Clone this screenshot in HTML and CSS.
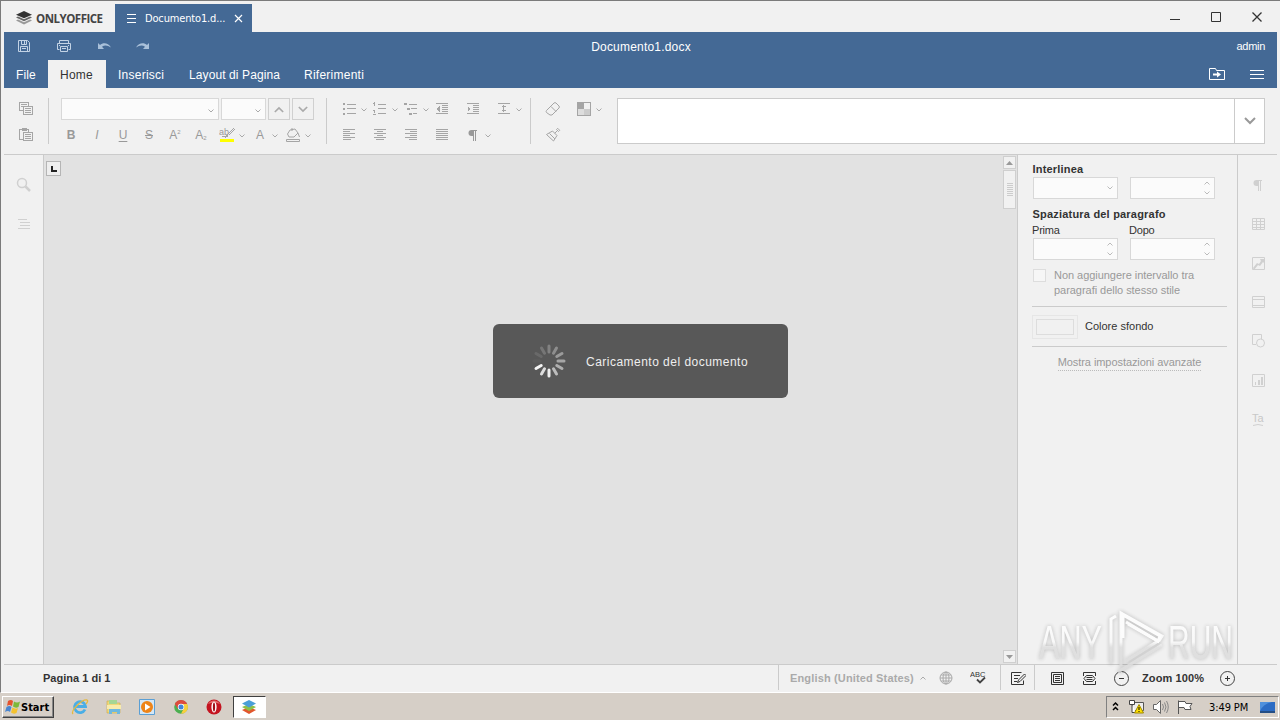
FILE: index.html
```html
<!DOCTYPE html>
<html lang="it">
<head>
    <meta charset="UTF-8">
    <meta name="viewport" content="width=device-width, initial-scale=1.0">
    <title>Documento1.docx - ONLYOFFICE</title>
    <link rel="stylesheet" href="styles.css">
</head>
<body>
    <!-- shared icons -->
    <svg class="sprite">
        <symbol id="caret" viewBox="0 0 6 4"><path d="M.5 .5L3 3L5.500 .5" fill="none" stroke="currentColor"/></symbol>
        <symbol id="caret-up" viewBox="0 0 6 4"><path d="M.5 3.500L3 1L5.500 3.500" fill="none" stroke="currentColor"/></symbol>
        <symbol id="pilcrow" viewBox="0 0 14 14"><path d="M7 2H5.500a3 3 0 0 0 0 6H7z" fill="currentColor"/><path d="M7.500 2v11M9.500 2v11M6 2.500h5" stroke="currentColor" fill="none"/></symbol>
    </svg>

    <div class="window">
        <div class="titlebar">
            <div class="brand">
                <svg width="16" height="14" viewBox="0 0 16 14"><path d="M8 7.300L0 3.700 8 0l8 3.700z" fill="#333"/><path d="M0 6.500l2-.9 6 2.700 6-2.700 2 .9-8 3.700z" fill="#666"/><path d="M0 9.500l2-.9 6 2.700 6-2.700 2 .9L8 13.400z" fill="#999"/></svg>
                <span>ONLYOFFICE</span>
            </div>
            <div class="doc-tab">
                <svg width="10" height="10"><path d="M0 1.500h9M0 5.500h9M0 9.500h9" stroke="#fff"/></svg>
                <span class="doc-name">Documento1.d...</span>
                <svg width="9" height="9"><path d="M1 1l7 7M8 1l-7 7" stroke="#fff" stroke-width="1.200"/></svg>
            </div>
            <div class="win-buttons">
                <svg width="12" height="12"><path d="M1 8.500h10" stroke="#333"/></svg>
                <svg width="12" height="12"><path d="M1.500 1.500h9v9h-9z" fill="none" stroke="#333"/></svg>
                <svg width="12" height="12"><path d="M1.500 1.500l9 9M10.500 1.500l-9 9" stroke="#333" stroke-width="1.300"/></svg>
            </div>
        </div>

        <div class="header">
            <div class="quick">
                <svg width="14" height="14"><path d="M1.500 1.500h9l2 2v9h-11zM4.500 1.500v4h5v-4M7.500 2v3M3.500 12.500v-5h7v5M5 9.500h4" fill="none" stroke="#c3d3e5"/></svg>
                <svg width="16" height="14"><path d="M3.500 4.500v-3h9v3M3.500 10.500h-2v-6h13v6h-2M4.500 7.500h7v5h-7zM6 9.500h4M3 6.500h1M12 6.500h1" fill="none" stroke="#c3d3e5"/></svg>
                <svg width="14" height="14"><path d="M1 4v6h6L5 7.800C7.500 5.800 10.500 6 14 8.500 11 3.500 6 3.500 3 6z" fill="#a9c0d9"/></svg>
                <svg width="14" height="14"><path d="M13 4v6H7l2-2.200C6.500 5.800 3.500 6 0 8.500 3 3.500 8 3.500 11 6z" fill="#a9c0d9"/></svg>
            </div>
            <div class="doc-title">Documento1.docx</div>
            <div class="user">admin</div>
        </div>

        <div class="tabs">
            <div class="tab tab-file">File</div>
            <div class="tab tab-home active">Home</div>
            <div class="tab tab-insert">Inserisci</div>
            <div class="tab tab-layout">Layout di Pagina</div>
            <div class="tab tab-refs">Riferimenti</div>
            <div class="tabs-right">
                <svg width="17" height="14"><path d="M.5 12.500v-11h6l1 2h8v9z" fill="none" stroke="#fff"/><path d="M4 7.500h5" stroke="#fff" stroke-width="2"/><path d="M8 4.500l4 3-4 3z" fill="#fff"/></svg>
                <svg width="14" height="10"><path d="M0 1.500h14M0 5.500h14M0 9.500h14" stroke="#fff"/></svg>
            </div>
        </div>

        <div class="toolbar">
            <div class="group group-clip">
                <div class="row">
                    <svg class="ico" viewBox="0 0 16 16"><path d="M5.500 9.500h-4v-8h9v3M3 3.500h6M3 5.500h2M5.500 5.500h9v8h-9zM7 7.500h6M7 9.500h6M7 11.500h6"/></svg>
                </div>
                <div class="row">
                    <svg class="ico" viewBox="0 0 16 16"><path d="M5.500 12.500h-4v-10h9v2M4 1.500h4v2H4zM5.500 5.500h9v8h-9zM7 7.500h6M7 9.500h6M7 11.500h6"/></svg>
                </div>
            </div>
            <div class="sep"></div>
            <div class="group group-font">
                <div class="row combos">
                    <div class="combo combo-font"><svg class="caret"><use href="#caret"/></svg></div>
                    <div class="combo combo-size"><svg class="caret"><use href="#caret"/></svg></div>
                    <div class="size-btn"><svg class="caret-big"><use href="#caret-up"/></svg></div>
                    <div class="size-btn"><svg class="caret-big"><use href="#caret"/></svg></div>
                </div>
                <div class="row format">
                    <span class="glyph bold">B</span>
                    <span class="glyph italic">I</span>
                    <span class="glyph underline">U</span>
                    <span class="glyph strike">S</span>
                    <span class="glyph">A<sup>2</sup></span>
                    <span class="glyph">A<sub>2</sub></span>
                    <div class="btn">
                        <svg class="ico" viewBox="0 0 16 16"><text x="0" y="8" class="mini">ab</text><path d="M14.500 1.500l-6 6-1 2 2-1 6-6M3 9.500h4"/><path d="M1 13.500h14" class="marker"/></svg>
                        <svg class="caret"><use href="#caret"/></svg>
                    </div>
                    <div class="btn"><span class="glyph">A</span><svg class="caret"><use href="#caret"/></svg></div>
                    <div class="btn">
                        <svg class="ico smooth" viewBox="0 0 16 16"><path d="M5 3l5-1 3 4-4 4H4L2.500 7zM7 1v3M13 6l1.500 4"/><path d="M1.500 12.500h13v2h-13z"/></svg>
                        <svg class="caret"><use href="#caret"/></svg>
                    </div>
                </div>
            </div>
            <div class="sep"></div>
            <div class="group group-par">
                <div class="row">
                    <div class="btn"><svg class="ico" viewBox="0 0 16 16"><path d="M2 3h2M2 8h2M2 13h2" class="dot"/><path d="M6 3.500h9M6 7.500h9M6 12.500h9"/></svg><svg class="caret"><use href="#caret"/></svg></div>
                    <div class="btn"><svg class="ico" viewBox="0 0 16 16"><path d="M2.500 1v4M1 2.500h1M1 9.500h2M2.500 10v2M1 13.500h3M6 3.500h8M6 7.500h8M6 12.500h8"/></svg><svg class="caret"><use href="#caret"/></svg></div>
                    <div class="btn"><svg class="ico" viewBox="0 0 16 16"><path d="M1 3h3M4 8h3M6 13h3" class="dot"/><path d="M6 3.500h8M8 7.500h6M10 12.500h4"/></svg><svg class="caret"><use href="#caret"/></svg></div>
                    <div class="btn"><svg class="ico" viewBox="0 0 16 16"><path d="M2 2.500h12M8 4.500h6M8 6.500h6M8 8.500h6M8 10.500h6M2 12.500h12"/><path d="M6 5v6L2.500 8z" class="solid"/></svg></div>
                    <div class="btn"><svg class="ico" viewBox="0 0 16 16"><path d="M2 2.500h12M8 4.500h6M8 6.500h6M8 8.500h6M8 10.500h6M2 12.500h12"/><path d="M2.500 5v6L6 8z" class="solid"/></svg></div>
                    <div class="btn"><svg class="ico" viewBox="0 0 16 16"><path d="M2 2.500h12M2 12.500h12M7.500 4v7M5.500 5.500h4M5.500 9.500h4"/></svg><svg class="caret"><use href="#caret"/></svg></div>
                </div>
                <div class="row">
                    <div class="btn"><svg class="ico" viewBox="0 0 16 16"><path d="M2 2.500h12M2 4.500h7M2 6.500h12M2 8.500h7M2 10.500h12M2 12.500h8"/></svg></div>
                    <div class="btn"><svg class="ico" viewBox="0 0 16 16"><path d="M2 2.500h12M5 4.500h6M2 6.500h12M5 8.500h6M2 10.500h12M4 12.500h8"/></svg></div>
                    <div class="btn"><svg class="ico" viewBox="0 0 16 16"><path d="M2 2.500h12M7 4.500h7M2 6.500h12M7 8.500h7M2 10.500h12M6 12.500h8"/></svg></div>
                    <div class="btn"><svg class="ico" viewBox="0 0 16 16"><path d="M2 2.500h12M2 4.500h12M2 6.500h12M2 8.500h12M2 10.500h12M2 12.500h12"/></svg></div>
                    <div class="btn"><svg class="pil"><use href="#pilcrow"/></svg><svg class="caret"><use href="#caret"/></svg></div>
                </div>
            </div>
            <div class="sep"></div>
            <div class="group group-style">
                <div class="row">
                    <div class="btn"><svg class="ico smooth" viewBox="0 0 16 16"><path d="M1.500 9.500L9 2q1-.8 2 0l3 3q.8 1 0 2l-7 7H5L1.500 11.500q-.8-1 0-2zM6 5.500l5 5"/></svg></div>
                    <div class="btn"><svg class="ico" viewBox="0 0 16 16"><path d="M8 8h6v6H8z" fill="#ccc" stroke="none"/><path d="M2 8h6v6H2z" fill="#ddd" stroke="none"/><path d="M2 2h6v6H2z" class="solid"/><path d="M1.500 1.500h13v13h-13z"/></svg><svg class="caret"><use href="#caret"/></svg></div>
                </div>
                <div class="row">
                    <div class="btn"><svg class="ico smooth" viewBox="0 0 16 16"><path d="M1.500 7.500l6-3.500 4.500 4.500L8.500 14zM4.500 6.500l5.500 5.500M9.800 6.200L12 4M11.500 2.500l2 2 1.200-1.200-2-2z"/></svg></div>
                </div>
            </div>
            <div class="styles-box">
                <div class="styles-arrow"><svg width="12" height="8"><path d="M1 1l5 5 5-5" fill="none" stroke="#999" stroke-width="2"/></svg></div>
            </div>
        </div>

        <div class="main">
            <div class="left-bar">
                <svg class="side" viewBox="0 0 16 16"><circle cx="6" cy="6" r="4.500" stroke-width="1.500"/><path d="M9.500 9.500l4.500 4.500" stroke-width="2.500"/></svg>
                <svg class="side" viewBox="0 0 16 16"><path d="M2 3.500h9M4 6.500h10M4 9.500h10M2 12.500h12"/></svg>
            </div>
            <div class="canvas">
                <div class="tab-stop"><svg width="13" height="13"><path d="M5 4v5H10" fill="none" stroke="#222" stroke-width="2"/></svg></div>
                <div class="scroll">
                    <div class="scroll-btn"><svg width="7" height="4"><path d="M0 4l3.500-4L7 4z" fill="#999"/></svg></div>
                    <div class="thumb"><svg width="6" height="14"><path d="M0 .5h6M0 2.500h6M0 4.500h6M0 6.500h6M0 8.500h6M0 10.500h6M0 12.500h6" stroke="#ccc"/></svg></div>
                    <div class="scroll-btn scroll-down"><svg width="7" height="4"><path d="M0 0l3.500 4L7 0z" fill="#999"/></svg></div>
                </div>
            </div>
            <div class="panel">
                <div class="label-bold">Interlinea</div>
                <div class="fields">
                    <div class="combo field"><svg class="caret"><use href="#caret"/></svg></div>
                    <div class="combo field spin"><svg class="caret"><use href="#caret-up"/></svg><svg class="caret"><use href="#caret"/></svg></div>
                </div>
                <div class="label-bold spacing-title">Spaziatura del paragrafo</div>
                <div class="labels"><span>Prima</span><span>Dopo</span></div>
                <div class="fields">
                    <div class="combo field spin"><svg class="caret"><use href="#caret-up"/></svg><svg class="caret"><use href="#caret"/></svg></div>
                    <div class="combo field spin"><svg class="caret"><use href="#caret-up"/></svg><svg class="caret"><use href="#caret"/></svg></div>
                </div>
                <div class="check"><span class="box"></span><span class="check-text">Non aggiungere intervallo tra<br>paragrafi dello stesso stile</span></div>
                <div class="line"></div>
                <div class="color-row"><span class="color-box"><i></i></span><span>Colore sfondo</span></div>
                <div class="line"></div>
                <div class="advanced"><span>Mostra impostazioni avanzate</span></div>
            </div>
            <div class="right-bar">
                <svg class="pil"><use href="#pilcrow"/></svg>
                <svg class="side" viewBox="0 0 16 16"><path d="M2.500 2.500h12v11h-12zM2.500 5.500h12M2.500 8.500h12M2.500 11.500h12M6.500 2.500v11M10.500 2.500v11"/></svg>
                <svg class="side" viewBox="0 0 16 16"><path d="M2.500 2.500h12v12h-12z"/><path d="M3 13l4-5 2 1 2-3-1-2h4v4l-1-1-3 4-2-1-4 5z" class="fill"/></svg>
                <svg class="side" viewBox="0 0 16 16"><path d="M2.500 2.500h12v11h-12zM2.500 5.500h12M2.500 11.500h12"/></svg>
                <svg class="side" viewBox="0 0 16 16"><path d="M6 11.500H2.500v-10h9V6"/><circle cx="10.500" cy="10" r="4"/></svg>
                <svg class="side" viewBox="0 0 16 16"><path d="M2.500 2.500h12v12h-12z"/><path d="M5 10h1v3H5zM8 8h2v5H8zM11 5h2v8h-2z" class="fill"/></svg>
                <svg class="side" viewBox="0 0 16 16"><text x="2" y="11" class="art">Ta</text><path d="M3 14.500q5-2 10 0"/></svg>
            </div>
        </div>

        <div class="statusbar">
            <div class="pages">Pagina 1 di 1</div>
            <div class="lang">English (United States)<svg class="caret"><use href="#caret-up"/></svg></div>
            <svg class="st" viewBox="0 0 16 16"><g fill="none" stroke="#aaa"><circle cx="8" cy="8" r="6"/><ellipse cx="8" cy="8" rx="3" ry="6"/><path d="M8 2v12M2 8h12M3 5h10M3 11h10"/></g></svg>
            <svg class="st abc" viewBox="0 0 16 16"><text x="0" y="7">ABC</text><path d="M7 9.500l3 3 5-5" fill="none" stroke="#444" stroke-width="1.800"/></svg>
            <div class="review"><svg class="st" viewBox="0 0 16 16"><path d="M11.500 2.500h-10v12h12v-4M4 5.500h6M4 8.500h4M4 11.500h3M14.500 4l-6 6-1 2.500 2.500-1 6-6z" fill="none" stroke="#333"/></svg></div>
            <svg class="st" viewBox="0 0 16 16"><path d="M2.500 2.500h12v12h-12zM4.500 4.500h8v8h-8zM6 6.500h5M6 8.500h5M6 10.500h5" fill="none" stroke="#333"/></svg>
            <svg class="st st-width" viewBox="0 0 16 16"><path d="M2.500 6V2.500h12V6M2.500 11v3.500h12V11M5.500 5.500h6l2.500 3-2.500 3h-6L3 8.500zM5.500 7.500h6M5.500 9.500h6" fill="none" stroke="#333"/></svg>
            <svg class="st" viewBox="0 0 16 16"><circle cx="8.500" cy="8.500" r="7" fill="none" stroke="#444"/><path d="M6 8.500h5" stroke="#333"/></svg>
            <div class="zoom">Zoom 100%</div>
            <svg class="st" viewBox="0 0 16 16"><circle cx="8.500" cy="8.500" r="7" fill="none" stroke="#444"/><path d="M6 8.500h5M8.500 6v5" stroke="#333"/></svg>
        </div>

        <div class="loader">
            <svg width="36" height="36" viewBox="-18 -18 36 36" stroke="#fff" stroke-width="3" stroke-linecap="round">
                <path d="M0-9v-6" opacity=".25"/>
                <path d="M0-9v-6" transform="rotate(30)" opacity=".32"/>
                <path d="M0-9v-6" transform="rotate(60)" opacity=".4"/>
                <path d="M0-9v-6" transform="rotate(90)" opacity=".47"/>
                <path d="M0-9v-6" transform="rotate(120)" opacity=".52"/>
                <path d="M0-9v-6" transform="rotate(150)" opacity=".6"/>
                <path d="M0-9v-6" transform="rotate(180)" opacity=".9"/>
                <path d="M0-9v-6" transform="rotate(210)" opacity=".8"/>
                <path d="M0-9v-6" transform="rotate(240)" opacity=".95"/>
                <path d="M0-9v-6" transform="rotate(270)" opacity=".03"/>
                <path d="M0-9v-6" transform="rotate(300)" opacity=".1"/>
                <path d="M0-9v-6" transform="rotate(330)" opacity=".18"/>
            </svg>
            <span>Caricamento del documento</span>
        </div>
    </div>

    <div class="taskbar">
        <div class="start">
            <svg width="16" height="16"><path d="M3 2q3-2 5 0L7 7Q4 5 2 7z" fill="#e5532d"/><path d="M9 2.500q3 2 6 0L13.500 8q-3 1.500-5.500-.5z" fill="#7db83a"/><path d="M1.500 8q3-2 5 0l-1.500 5q-2-2-5 0z" fill="#4a86d0"/><path d="M7.500 8.500q3 2 5.500.5l-1.500 5q-3 1.500-5.500-.5z" fill="#f4c22e"/></svg>
            <span>Start</span>
        </div>
        <div class="launch">
            <svg width="18" height="18"><path d="M14 11.500a5.500 5.500 0 1 1 .5-3H5" fill="none" stroke="#4aaee6" stroke-width="2.800"/><path d="M2 16C-1 13 11 1 16 2c1.500.5 0 3-1 4" fill="none" stroke="#e6b93d" stroke-width="1.300"/></svg>
            <svg width="18" height="18"><path d="M2 3h5l1 2h7v10H2z" fill="#f0d878" stroke="#c9a74a" stroke-width=".6"/><path d="M4 2h8v4H4z" fill="#a5d694"/><path d="M2 7h14v4H2z" fill="#f8ebac"/><path d="M4 16v-5h11v5h-3v-2H7v2z" fill="#6fb8de"/></svg>
            <svg width="18" height="18"><path d="M1.500 1.500h15v15h-15z" fill="#d4e7f6" stroke="#5b9fd4"/><circle cx="9" cy="9" r="6" fill="#ee8418"/><path d="M7 5.500v7L12.500 9z" fill="#fff"/></svg>
            <svg width="18" height="18"><circle cx="9" cy="9" r="6.800" fill="#4caf50"/><path d="M2.800 6A6.800 6.800 0 0 1 15.200 6H9l-3 5z" fill="#dd4b3e"/><path d="M15.200 6A6.800 6.800 0 0 1 9 15.800L12 10 9 6z" fill="#f8cf3d"/><circle cx="9" cy="9" r="3.200" fill="#fff"/><circle cx="9" cy="9" r="2.500" fill="#4285d8"/></svg>
            <svg width="18" height="18"><circle cx="9" cy="9" r="7.500" fill="#c41420"/><path d="M3 6a7 7 0 0 1 12 0q-6-3-12 0z" fill="#e36a6a"/><ellipse cx="9" cy="9" rx="2.600" ry="5.500" fill="#fff"/><ellipse cx="9" cy="9" rx="1.100" ry="4.500" fill="#a00f18"/></svg>
            <div class="task-active"><svg width="16" height="16"><path d="M1 11l7-3 7 3-7 4z" fill="#e2562c"/><path d="M1 8l7-3 7 3-7 4z" fill="#8dc04a"/><path d="M1 4.500L8 1l7 3.500L8 8.500z" fill="#4a9fd8"/></svg></div>
        </div>
        <div class="tray">
            <svg width="9" height="12"><path d="M2 4.500l2.500-2.500L7 4.500M2 9l2.500-2.500L7 9" fill="none" stroke="#000" stroke-width="1.500"/></svg>
            <svg class="tray-net" width="18" height="16"><path d="M4.500 3.500h11v8h-11z" fill="#eee" stroke="#555"/><path d="M1.500 1.500h5v4h-5zM4 5.500v8h4" fill="#fff" stroke="#444"/><path d="M11 5.500L15.500 14h-9z" fill="#ffe000" stroke="#a08a00"/><path d="M11 8v3M11 12v1" stroke="#000"/></svg>
            <svg class="tray-vol" width="18" height="16"><path d="M1.500 5.500h3l4-4v13l-4-4h-3z" fill="#fff" stroke="#666"/><path d="M10.500 5q2 3 0 6M12.500 3.500q3 4.500 0 9M14.500 2q3.500 6 0 12" fill="none" stroke="#888"/></svg>
            <svg class="tray-flag" width="18" height="16"><path d="M2.500 15V1.500M3 2.500h6l1 2h6l-2 3 1 3H9l-1-2H3" fill="#fff" stroke="#555"/></svg>
            <span class="clock">3:49 PM</span>
            <svg class="tray-desk" width="15" height="12"><path d="M0 1h15v9H0z" fill="#2c6cc4"/><path d="M0 10Q3 3 12 1H0z" fill="#4f90dc"/><path d="M0 10h15v2H0z" fill="#244e85"/></svg>
        </div>
    </div>

    <!-- watermark lies over the panel and the status bar -->
    <svg class="watermark" width="244" height="80">
        <defs>
            <linearGradient id="wm" gradientUnits="userSpaceOnUse" x1="0" y1="10" x2="0" y2="62">
                <stop offset="0" stop-color="#fff"/>
                <stop offset=".5" stop-color="#fafafa"/>
                <stop offset=".6" stop-color="#dedede"/>
                <stop offset="1" stop-color="#dadada"/>
            </linearGradient>
        </defs>
        <text x="3" y="53" textLength="63" lengthAdjust="spacingAndGlyphs">ANY</text>
        <text x="132" y="53" textLength="65" lengthAdjust="spacingAndGlyphs">RUN</text>
        <path d="M75 58V13l5-3M85 60V7l41 23-3 5M90 16l32 19-32 20M82 66l44-27"/>
        <path d="M87 32V9l37 21-2 5-30-17" class="wm-top"/>
    </svg>
</body>
</html>
```
FILE: styles.css
```css
body {
    margin: 0;
    width: 1280px;
    height: 720px;
    overflow: hidden;
    position: relative;
    font-family: "Liberation Sans", Arial, sans-serif;
    font-size: 11px;
    color: #333;
    background-color: #d6cfc7;
}

* {
    box-sizing: border-box;
}

svg {
    display: block;
    flex: none;
}

.sprite {
    position: absolute;
    width: 0;
    height: 0;
}

.window {
    height: 693px;
    padding: 3px 3px 0 3px;
    border-top: 1px solid #7b7b7b;
    border-left: 1px solid #7b7b7b;
    border-bottom: 1px solid #fff;
    background-color: #f1f1f1;
}

/* Title bar */
.titlebar {
    height: 28px;
    display: flex;
}

.brand {
    width: 111px;
    padding-left: 12px;
    display: flex;
    align-items: center;
    gap: 4px;
    font-family: "Open Sans", sans-serif;
    font-weight: bold;
    font-size: 11.5px;
    letter-spacing: -0.5px;
}

.brand span {
    color: #444;
}

.doc-tab {
    width: 137px;
    padding: 0 9px 0 12px;
    display: flex;
    align-items: center;
    background-color: #446995;
    color: #fff;
    font-family: "DejaVu Sans Condensed", "DejaVu Sans", sans-serif;
    font-size: 11px;
    letter-spacing: -0.15px;
}

.doc-name {
    flex: 1;
    padding-left: 8px;
    white-space: nowrap;
}

.win-buttons {
    margin-left: auto;
    padding: 7px 14px 0 0;
    display: flex;
    gap: 29px;
}

/* Blue header */
.header,
.tabs {
    height: 28px;
    display: flex;
    align-items: center;
    background-color: #446995;
    color: #fff;
    font-size: 12px;
}

.quick {
    flex: 1;
    display: flex;
    align-items: center;
    gap: 25px;
    padding-left: 13px;
}

.doc-title {
    padding-top: 1px;
    letter-spacing: 0.2px;
}

.user {
    flex: 1;
    padding-right: 12px;
    text-align: right;
    font-size: 11px;
    letter-spacing: -0.3px;
}

.tab {
    height: 28px;
    line-height: 30px;
    padding-left: 12px;
    letter-spacing: 0.1px;
}

.tab-file { width: 44px; }
.tab-home { width: 58px; }
.tab-insert { width: 71px; }
.tab-layout { width: 115px; }

.tab-home,
.tab-insert,
.tab-refs {
    letter-spacing: 0.25px;
}

.tab.active {
    background-color: #f1f1f1;
    color: #333;
}

.tabs-right {
    margin-left: auto;
    padding-right: 13px;
    display: flex;
    align-items: center;
    gap: 24px;
}

/* Toolbar */
.toolbar {
    height: 67px;
    display: flex;
    padding: 10px 12px 0 12px;
    border-bottom: 1px solid #cbcbcb;
    color: #999;
}

.row {
    height: 22px;
    margin-bottom: 4px;
    display: flex;
    align-items: center;
}

.sep {
    width: 1px;
    height: 46px;
    background-color: #cbcbcb;
}

.group-clip { width: 32px; }
.group-font { width: 277px; padding-left: 12px; }
.group-par { width: 203px; padding-left: 12px; }
.group-style { width: 86px; padding-left: 12px; }

.ico {
    width: 16px;
    height: 16px;
    margin: 0 2px;
    fill: none;
    stroke: #a5a5a5;
    shape-rendering: crispEdges;
}

.ico.smooth {
    shape-rendering: auto;
}

.ico .dot {
    stroke-width: 2;
}

.ico .solid {
    fill: #a5a5a5;
    stroke: none;
}

.ico .marker {
    stroke: #ffff00;
    stroke-width: 3;
}

.ico .mini {
    fill: #999;
    stroke: none;
    font-size: 9px;
}

.caret {
    width: 6px;
    height: 4px;
    color: #aaa;
}

.btn {
    width: 31px;
    display: flex;
    align-items: center;
}

.btn .caret {
    margin-left: 2px;
    margin-top: 1px;
}

.pil {
    width: 14px;
    height: 14px;
    margin: 0 3px;
}

.combo {
    height: 22px;
    display: flex;
    align-items: center;
    justify-content: flex-end;
    padding-right: 4px;
    background-color: #fbfbfb;
    border: 1px solid #d8d8d8;
}

.combos {
    gap: 2px;
}

.combos .combo .caret {
    margin-top: 3px;
}

.combo-font { width: 158px; }
.combo-size { width: 45px; }

.size-btn {
    width: 22px;
    height: 22px;
    display: flex;
    align-items: center;
    justify-content: center;
    border: 1px solid #d0d0d0;
}

.caret-big {
    width: 10px;
    height: 7px;
    color: #aaa;
}

.format .glyph {
    width: 20px;
    margin-right: 6px;
    text-align: center;
    font-size: 12px;
    line-height: 20px;
    white-space: nowrap;
}

.format .btn {
    width: 33px;
}

.format .btn .glyph {
    margin-right: 0;
}

.bold { font-weight: bold; }
.italic { font-style: italic; }
.underline { text-decoration: underline; text-underline-offset: 2px; }
.strike { text-decoration: line-through; }

.glyph sup,
.glyph sub {
    font-size: 6px;
    line-height: 0;
}

.glyph sup { vertical-align: 5px; }
.glyph sub { vertical-align: -1px; }

.styles-box {
    width: 648px;
    height: 46px;
    display: flex;
    justify-content: flex-end;
    background-color: #fff;
    border: 1px solid #cbcbcb;
}

.styles-arrow {
    width: 30px;
    display: flex;
    align-items: center;
    justify-content: center;
    border-left: 1px solid #cbcbcb;
}

/* Document area */
.main {
    height: 509px;
    display: flex;
}

.left-bar {
    width: 40px;
    padding: 22px 0 0 12px;
    border-right: 1px solid #cbcbcb;
}

.side {
    width: 16px;
    height: 16px;
    fill: none;
    stroke: #d0d0d0;
}

.side .fill {
    fill: #d0d0d0;
    stroke: none;
}

.left-bar .side {
    margin-bottom: 23px;
}

.canvas {
    flex: 1;
    display: flex;
    justify-content: space-between;
    background-color: #e2e2e2;
}

.tab-stop {
    width: 15px;
    height: 15px;
    margin: 6px 0 0 2px;
    border: 1px solid #b5b5b5;
    background-color: #eee;
}

.scroll {
    width: 14px;
    display: flex;
    flex-direction: column;
    padding: 1px 1px 1px 0;
}

.scroll-btn,
.thumb {
    display: flex;
    align-items: center;
    justify-content: center;
    height: 13px;
    background-color: #f1f1f1;
    border: 1px solid #cfcfcf;
}

.thumb {
    height: 39px;
    margin-top: 1px;
}

.scroll-down {
    margin-top: auto;
}

.panel {
    width: 220px;
    padding: 7px 10px 0 14px;
    border-left: 1px solid #cbcbcb;
    line-height: 15px;
}

.label-bold {
    font-weight: bold;
    letter-spacing: 0.2px;
    padding-left: 0.5px;
}

.fields {
    display: flex;
    gap: 12px;
    padding-left: 1px;
}

.field {
    width: 85px;
}

.field .caret {
    color: #bbb;
}

.spin {
    flex-direction: column;
    align-items: flex-end;
    justify-content: center;
    gap: 6px;
}

.spacing-title {
    margin-top: 8px;
}

.labels {
    display: flex;
    height: 16px;
    padding-top: 1px;
    letter-spacing: -0.2px;
}

.labels span {
    width: 97px;
}

.check {
    display: flex;
    margin: 8px 0 8px 1px;
    color: #999;
}

.box {
    width: 13px;
    height: 13px;
    margin: 1px 8px 0 0;
    border: 1px solid #ddd;
    background-color: #f6f6f6;
}

.check-text {
    white-space: nowrap;
    letter-spacing: -0.04px;
}

.line {
    height: 1px;
    background-color: #cbcbcb;
}

.color-row {
    height: 39px;
    display: flex;
    align-items: center;
    gap: 7px;
}

.color-box {
    width: 46px;
    height: 24px;
    padding: 3px;
    border: 1px solid #e6e6e6;
}

.color-box i {
    display: block;
    height: 16px;
    border: 1px solid #ddd;
}

.advanced {
    padding-top: 8px;
    text-align: center;
    color: #999;
    letter-spacing: -0.07px;
}

.advanced span {
    display: inline-block;
    line-height: 15px;
    border-bottom: 1px dotted #bbb;
}

.right-bar {
    width: 40px;
    padding: 23px 0 0 12px;
    border-left: 1px solid #cbcbcb;
    display: flex;
    flex-direction: column;
    gap: 23px;
    color: #d0d0d0;
}

.right-bar .pil {
    margin: 0 1px 1px;
}

.side .art {
    fill: #c8c8c8;
    stroke: none;
    font-size: 11px;
}

/* Status bar */
.statusbar {
    height: 28px;
    display: flex;
    align-items: center;
    border-top: 1px solid #cbcbcb;
    padding: 0 42px 2px 39px;
    font-weight: bold;
}

.pages {
    width: 735px;
    letter-spacing: 0.02px;
}

.lang {
    height: 25px;
    width: 160px;
    padding-left: 11px;
    border-left: 1px solid #cbcbcb;
    display: flex;
    align-items: center;
    gap: 6px;
    white-space: nowrap;
    letter-spacing: 0.15px;
    color: #aaa;
}

.st {
    width: 16px;
    height: 16px;
}

.abc {
    margin: 0 14px 0 16px;
}

.abc text {
    font-family: "Liberation Sans", sans-serif;
    font-weight: normal;
    font-size: 7.5px;
    fill: #333;
}

.review {
    width: 35px;
    height: 25px;
    margin-right: 14px;
    display: flex;
    align-items: center;
    justify-content: center;
    border-left: 1px solid #cbcbcb;
    border-right: 1px solid #cbcbcb;
}

.st-width {
    margin: 0 16px;
}

.zoom {
    width: 76px;
    padding: 0 0 0 13px;
    white-space: nowrap;
    margin-right: 14px;
    letter-spacing: 0.1px;
}

/* Loading message */
.loader {
    position: absolute;
    left: 493px;
    top: 324px;
    width: 295px;
    height: 74px;
    display: flex;
    align-items: center;
    gap: 19px;
    padding-left: 38px;
    border-radius: 6px;
    background-color: #585858;
    color: #eee;
    font-size: 12px;
    letter-spacing: 0.48px;
    white-space: nowrap;
}

.loader span {
    padding-top: 1px;
}

/* Windows taskbar */
.taskbar {
    height: 27px;
    display: flex;
    padding: 3px 1px 2px 2px;
    font-family: "DejaVu Sans Condensed", "DejaVu Sans", sans-serif;
    color: #000;
}

.start {
    width: 52px;
    height: 22px;
    display: flex;
    align-items: center;
    padding-left: 2px;
    font-weight: bold;
    font-size: 11px;
    border: 1px solid;
    border-color: #fff #404040 #404040 #fff;
    box-shadow: inset -1px -1px #888;
}

.launch {
    display: flex;
    align-items: center;
    gap: 15.500px;
    padding-left: 17px;
    height: 22px;
}

.task-active {
    width: 33px;
    height: 22px;
    margin-left: -6px;
    display: flex;
    align-items: center;
    justify-content: center;
    background-color: #fff;
    border: 1px solid;
    border-color: #404040 #fff #fff #404040;
}

.tray {
    width: 173px;
    height: 22px;
    margin-left: auto;
    padding-left: 4px;
    display: flex;
    align-items: center;
    border: 1px solid;
    border-color: #808080 #fff #fff #808080;
}

.tray-net { margin-left: 8px; }
.tray-vol { margin-left: 6px; }
.tray-flag { margin-left: 6px; }

.clock {
    margin-left: 15px;
    width: 51px;
    font-size: 11px;
    letter-spacing: -0.1px;
    white-space: nowrap;
}

.watermark {
    position: absolute;
    left: 1036px;
    top: 606px;
    fill: none;
    stroke: url(#wm);
    stroke-width: 3;
    filter: drop-shadow(0 0 2px rgba(0, 0, 0, 0.28));
    font-family: "Liberation Sans", sans-serif;
    font-size: 49px;
    opacity: 0.85;
}

.watermark text {
    fill: url(#wm);
    stroke: none;
}

.watermark .wm-top {
    stroke: #fff;
}
```
